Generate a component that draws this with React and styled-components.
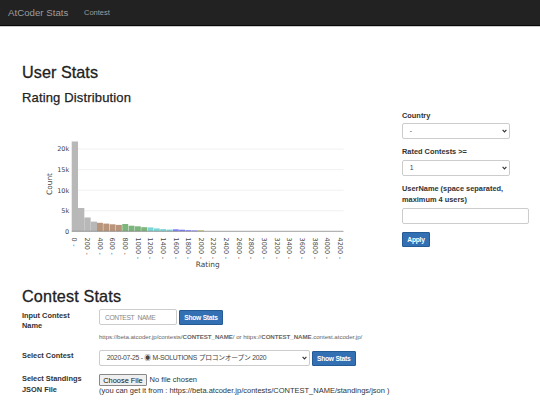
import React from "react";
import styled, { createGlobalStyle } from "styled-components";

const GlobalStyle = createGlobalStyle`
  * { box-sizing: border-box; }
  html, body { margin: 0; padding: 0; background: #fff; overflow: hidden; }
  body {
    font-family: "Liberation Sans", "Noto Sans CJK JP", sans-serif;
    font-size: 7.5px;
    line-height: 10.7px;
    color: #333;
  }
`;

const Page = styled.div`
  height: 404px;
  overflow: hidden;
`;

const Navbar = styled.nav`
  display: flex;
  align-items: center;
  height: 26px;
  padding: 1px 0 0 8px;
  background: #222;
  border-bottom: 1px solid #080808;
  box-shadow: 0 1px 0 #ccc;
  color: #9d9d9d;
`;

const Brand = styled.span`
  width: 76px;
  font-size: 9.7px;
  white-space: nowrap;
`;

const NavLink = styled.span`
  font-size: 7.5px;
`;

const Main = styled.main`
  padding: 36px 0 0 22px;
`;

const Title = styled.h2`
  margin: 0;
  height: 20px;
  line-height: 20px;
  font-size: 16.2px;
  font-weight: 400;
  letter-spacing: ${(p) => p.$spacing || "0.05px"};
  color: #222;
  -webkit-text-stroke: 0.3px #222;
`;

const Subtitle = styled.h3`
  margin: 8px 0 0;
  height: 16px;
  line-height: 16px;
  font-size: 13px;
  font-weight: 400;
  letter-spacing: 0.15px;
  color: #222;
  -webkit-text-stroke: 0.25px #222;
`;

const StatsRow = styled.section`
  display: flex;
  height: 180px;
`;

const ChartSvg = styled.svg`
  width: 380px;
  height: 180px;
  flex: none;
  font-family: "DejaVu Sans", Verdana, sans-serif;
  fill: #444;
`;

const Filters = styled.form`
  width: 127px;
  padding-top: 4.5px;
`;

const Label = styled.label`
  display: block;
  font-size: 7.4px;
  font-weight: 700;
  color: #333;
  white-space: nowrap;
`;

const FilterGroup = styled.div`
  display: flex;
  flex-direction: column;
  gap: 2px;
  margin-bottom: 8.2px;
`;

const SelectBox = styled.div`
  display: flex;
  flex: none;
  align-items: center;
  justify-content: space-between;
  width: ${(p) => p.$width};
  height: 16px;
  padding: 0 2.5px 0 6.8px;
  border: 1px solid #ccc;
  border-radius: 2px;
  background: #fff;
  color: #444;
  white-space: nowrap;
  font-size: 6.8px;
  letter-spacing: -0.25px;
`;

const Chevron = styled.svg`
  width: 5px;
  height: 4px;
  fill: none;
  stroke: #333;
  stroke-width: 1.15;
`;

const Input = styled.input`
  display: block;
  width: ${(p) => p.$width};
  height: 16px;
  padding: 0 5px;
  border: 1px solid #ccc;
  border-radius: 2px;
  background: #fff;
  font: 6.7px "Liberation Sans", sans-serif;
  letter-spacing: -0.4px;
  &::placeholder { color: #888; opacity: 1; }
`;

const Button = styled.button`
  flex: none;
  width: ${(p) => p.$width};
  height: 15px;
  padding: 0;
  border: 1px solid #245b94;
  border-radius: 1px;
  background: #3370b3;
  color: #fff;
  font: 700 6.7px "Liberation Sans", sans-serif;
  letter-spacing: -0.25px;
`;

const ContestSection = styled.section`
  display: flex;
  flex-direction: column;
`;

const FormRow = styled.div`
  display: grid;
  grid-template-columns: 77px 1fr;
  height: ${(p) => p.$height};
`;

const RowLabel = styled(Label)`
  padding-top: ${(p) => p.$top || "0"};
`;

const Controls = styled.div`
  display: flex;
  align-items: center;
  gap: 2px;
  padding-top: ${(p) => p.$top || "0"};
`;

const Help = styled.div`
  margin-top: 7px;
  font-size: 6.15px;
  letter-spacing: -0.045px;
  color: #666;
  white-space: nowrap;
`;

const FileLine = styled.div`
  display: flex;
  align-items: center;
  gap: 2.5px;
  height: 12px;
  font-size: 7.5px;
`;

const FileButton = styled.button`
  width: 48px;
  height: 12px;
  padding: 0;
  border: 1px solid #888;
  border-radius: 1px;
  background: #efefef;
  color: #111;
  font: 7.4px/9px "Liberation Sans", sans-serif;
`;

const FileNote = styled.div`
  font-size: 7.5px;
  white-space: nowrap;
`;

const COLORS = ["#b8b8b8", "#b8957b", "#7db57d", "#7dd6d6", "#7d7dff", "#cbcb70"];
const BARS = [
  89.8, 23.3, 13.8, 9.7, 8.5, 7.7, 7, 6.4, 7.3, 5.6, 5, 4.1, 3.9, 2.9, 2.2, 1.7,
  2, 1.6, 1.1, 0.9, 1.1,
];
const STEP = 6.32;
const BASE = 125.3;

function RatingChart() {
  return (
    <ChartSvg viewBox="22 0 380 180">
      {[0, 5, 10, 15, 20].map((k) => {
        const y = BASE - k * 4.11;
        return (
          <g key={k}>
            {k > 0 && <path d={`M71.7 ${y}H343.5`} stroke="#eee" strokeWidth="0.8" />}
            <text x="69.2" y={y + 2.3} fontSize="6.5" textAnchor="end">
              {k ? `${k}k` : "0"}
            </text>
          </g>
        );
      })}
      {BARS.map((h, i) => (
        <rect
          key={i}
          x={71.7 + i * STEP}
          y={BASE - h}
          width={i < 4 ? STEP : STEP - 0.4}
          height={h}
          fill={COLORS[Math.floor(i / 4)]}
        />
      ))}
      <path d={`M71.7 ${BASE}H343.5`} stroke="#777" strokeWidth="0.7" />
      {Array.from({ length: 22 }, (_, i) => (
        <text
          key={i}
          fontSize="6.5"
          transform={`translate(${72.4 + i * STEP * 2} 131.5) rotate(90)`}
        >
          {`${i * 200}`}
          <tspan dx="0.6"> -</tspan>
        </text>
      ))}
      <text x="207.7" y="160.7" fontSize="7.4" textAnchor="middle">Rating</text>
      <text transform="translate(51.6 78) rotate(-90)" fontSize="7.4" textAnchor="middle">
        Count
      </text>
    </ChartSvg>
  );
}

function Select({ width, children }) {
  return (
    <SelectBox $width={width}>
      <span>{children}</span>
      <Chevron viewBox="0 0 5 4">
        <path d="M0.6 0.8 2.5 2.8 4.4 0.8" />
      </Chevron>
    </SelectBox>
  );
}

export default function App() {
  return (
    <Page>
      <GlobalStyle />
      <Navbar>
        <Brand>AtCoder Stats</Brand>
        <NavLink>Contest</NavLink>
      </Navbar>
      <Main>
        <Title>User Stats</Title>
        <Subtitle>Rating Distribution</Subtitle>
        <StatsRow>
          <RatingChart />
          <Filters>
            <FilterGroup>
              <Label>Country</Label>
              <Select width="108px">-</Select>
            </FilterGroup>
            <FilterGroup>
              <Label>Rated Contests &gt;=</Label>
              <Select width="108px">1</Select>
            </FilterGroup>
            <FilterGroup>
              <Label>
                UserName (space separated,
                <br />
                maximum 4 users)
              </Label>
              <Input $width="127px" />
            </FilterGroup>
            <Button type="button" $width="28px">Apply</Button>
          </Filters>
        </StatsRow>
        <ContestSection>
          <Title $spacing="0.15px">Contest Stats</Title>
          <FormRow $height="44px">
            <RowLabel $top="4.5px">
              Input Contest
              <br />
              Name
            </RowLabel>
            <div>
              <Controls $top="3px">
                <Input $width="78px" placeholder="CONTEST_NAME" />
                <Button type="button" $width="44px">Show Stats</Button>
              </Controls>
              <Help>
                https://beta.atcoder.jp/contests/<b>CONTEST_NAME</b>/ or https://
                <b>CONTEST_NAME</b>.contest.atcoder.jp/
              </Help>
            </div>
          </FormRow>
          <FormRow $height="24px">
            <RowLabel $top="0.5px">Select Contest</RowLabel>
            <div>
              <Controls>
                <Select width="211px">2020-07-25 - ◉ M-SOLUTIONS プロコンオープン 2020</Select>
                <Button type="button" $width="43.5px">Show Stats</Button>
              </Controls>
            </div>
          </FormRow>
          <FormRow $height="24px">
            <RowLabel>
              Select Standings
              <br />
              JSON File
            </RowLabel>
            <div>
              <FileLine>
                <FileButton type="button">Choose File</FileButton>
                <span>No file chosen</span>
              </FileLine>
              <FileNote>
                (you can get it from : https://beta.atcoder.jp/contests/CONTEST_NAME/standings/json )
              </FileNote>
            </div>
          </FormRow>
        </ContestSection>
      </Main>
    </Page>
  );
}
